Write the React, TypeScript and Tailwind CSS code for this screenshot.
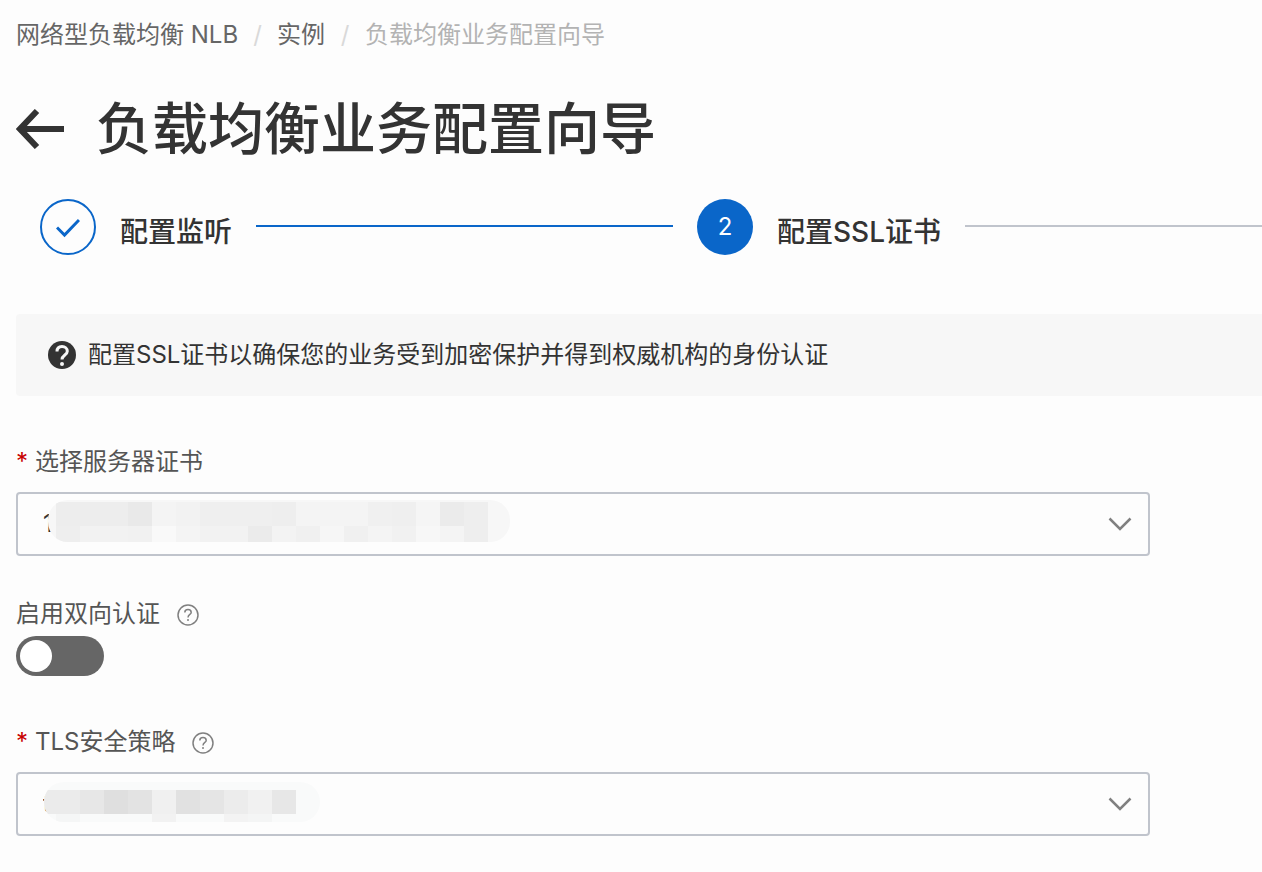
import { useState } from 'react'
import type { ReactNode } from 'react'

type Cell = [x: number, y: number, width: number, height: number, color: string]

const certificateCells: Cell[] = [
  [8, 2, 72, 24, '#ededed'],
  [80, 2, 24, 24, '#e9e9e9'],
  [104, 2, 24, 24, '#f4f4f4'],
  [128, 2, 24, 24, '#f2f2f2'],
  [152, 2, 72, 24, '#efefef'],
  [224, 2, 24, 24, '#eeeeee'],
  [248, 2, 72, 24, '#f4f4f4'],
  [320, 2, 24, 24, '#f0f0f0'],
  [344, 2, 24, 24, '#efefef'],
  [368, 2, 24, 24, '#f5f5f5'],
  [392, 2, 24, 24, '#ebebeb'],
  [416, 2, 24, 40, '#eeeeee'],
  [8, 26, 24, 16, '#eeeeee'],
  [32, 26, 48, 16, '#f2f2f2'],
  [80, 26, 24, 16, '#f1f1f1'],
  [104, 26, 24, 16, '#f9f9f9'],
  [128, 26, 24, 16, '#f4f4f4'],
  [152, 26, 48, 16, '#f2f2f2'],
  [200, 26, 24, 16, '#ebebeb'],
  [224, 26, 24, 16, '#f3f3f3'],
  [248, 26, 24, 16, '#f0f0f0'],
  [272, 26, 24, 16, '#f6f6f6'],
  [296, 26, 24, 16, '#f0f0f0'],
  [320, 26, 24, 16, '#f4f4f4'],
  [344, 26, 24, 16, '#f1f1f1'],
  [368, 26, 24, 16, '#f7f7f7'],
  [392, 26, 24, 16, '#f4f4f4'],
]

const policyCells: Cell[] = [
  [0, 8, 36, 24, '#ebebeb'],
  [36, 8, 24, 24, '#e7e7e7'],
  [60, 8, 24, 24, '#dfdfdf'],
  [84, 8, 24, 24, '#e3e3e3'],
  [108, 8, 24, 24, '#f0f0f0'],
  [132, 8, 24, 24, '#e1e1e1'],
  [156, 8, 24, 24, '#e5e5e5'],
  [180, 8, 24, 24, '#ececec'],
  [204, 8, 24, 24, '#f1f1f1'],
  [228, 8, 24, 24, '#e7e7e7'],
  [12, 32, 24, 8, '#f5f6f6'],
  [108, 32, 24, 8, '#f2f2f2'],
  [180, 32, 24, 8, '#f3f3f3'],
  [204, 32, 24, 8, '#f4f5f5'],
]

const Mosaic = ({ cells, width, height, fill, className }: { cells: Cell[]; width: number; height: number; fill: string; className: string }) => (
  <svg className={`pointer-events-none absolute overflow-hidden rounded-[20px] ${className}`} width={width} height={height} aria-hidden="true">
    <rect width={width} height={height} fill={fill} />
    {cells.map(([x, y, w, h, color], i) => (
      <rect key={i} x={x} y={y} width={w} height={h} fill={color} shapeRendering="crispEdges" />
    ))}
  </svg>
)

const HelpButton = ({ label }: { label: string }) => (
  <button type="button" aria-label={label} className="mt-0.5 ml-4 text-[#808080]">
    <svg width="24" height="24" viewBox="0 0 24 24" fill="none" stroke="currentColor" strokeWidth="1.5">
      <circle cx="12" cy="12" r="10" />
      <path d="M8.8 9.6C8.8 7.6 10 6.6 12 6.6s3.2 1 3.2 2.8c0 2-3.2 2.2-3.2 5" />
      <circle cx="12" cy="17" r="1" fill="currentColor" stroke="none" />
    </svg>
  </button>
)

const Required = () => <span className="mr-2 w-[11px] text-center text-[#c80000]">*</span>

const SelectBox = ({ id, value, children }: { id: string; value: string; children: ReactNode }) => (
  <div className="relative w-full max-w-[1134px]">
    <select
      id={id}
      className="block h-16 w-full appearance-none rounded-sm border-2 border-[#c0c4cc] bg-transparent px-[25px] text-2xl text-[#333]"
    >
      <option>{value}</option>
    </select>
    {children}
    <svg className="pointer-events-none absolute top-5 right-[18px]" width="24" height="24" fill="none" stroke="#808080" strokeWidth="2.5" aria-hidden="true">
      <path d="M1.5 6.5 12 17 22.5 6.5" />
    </svg>
  </div>
)

const Breadcrumb = () => (
  <nav aria-label="breadcrumb" className="flex text-2xl leading-9 whitespace-pre text-[#666]">
    <a href="#nlb">网络型负载均衡 NLB</a>
    <span className="w-[39px] text-center text-[#d9d9d9]">/</span>
    <a href="#instances">实例</a>
    <span className="w-10 text-center text-[#d9d9d9]">/</span>
    <span className="text-[#b3b3b3]" aria-current="page">负载均衡业务配置向导</span>
  </nav>
)

const Steps = () => (
  <ol className="mt-[30px] flex items-start pl-6 text-[28px] leading-[66px] font-medium whitespace-nowrap text-[#333]">
    <li className="flex items-start">
      <span className="flex size-14 items-center justify-center rounded-full border-2 border-[#0a66c9]">
        <svg width="24" height="24" fill="none" stroke="#0a66c9" strokeWidth="3" aria-hidden="true">
          <path d="M1 12.5 8.5 20 23 5" />
        </svg>
      </span>
      <span className="ml-6">配置监听</span>
      <span className="mx-6 mt-[26px] h-0.5 w-[417px] bg-[#0a66c9]" />
    </li>
    <li className="flex flex-1 items-start" aria-current="step">
      <span className="flex size-14 items-center justify-center rounded-full bg-[#0a66c9] text-2xl font-normal text-white">2</span>
      <span className="ml-6">配置SSL证书</span>
      <span className="mt-[26px] ml-6 h-0.5 flex-1 bg-[#c0c4cc]" />
    </li>
  </ol>
)

export default function App() {
  const [mutualAuth, setMutualAuth] = useState(false)

  return (
    <main className="min-h-screen overflow-hidden bg-[#fdfdfd] pt-[17px] pb-8 pl-4 font-[Inter,'Noto_Sans_CJK_SC',sans-serif] text-2xl leading-9 text-[#555]">
      <Breadcrumb />

      <header className="mt-9 flex items-center text-[#333]">
        <button type="button" aria-label="返回">
          <svg width="48" height="40" fill="none" stroke="currentColor" strokeWidth="6" aria-hidden="true">
            <path d="M48 20H4M21 2 4 20l17 18" />
          </svg>
        </button>
        <h1 className="ml-8 text-[56px] leading-[80px] font-medium">负载均衡业务配置向导</h1>
      </header>

      <Steps />

      <div className="mt-[49px] flex h-[82px] items-center rounded-l-sm bg-[#f7f7f7] pl-8 text-[#333]">
        <svg width="28" height="28" viewBox="0 0 28 28" fill="none" aria-hidden="true">
          <circle cx="14" cy="14" r="14" fill="#333" />
          <path d="M9 10.5C9 7 11 5.5 14 5.5s5.3 1.8 5.3 4.8c0 3.7-5.3 3.7-5.3 8.2" stroke="#f7f7f7" strokeWidth="3" />
          <circle cx="14" cy="23" r="2" fill="#f7f7f7" />
        </svg>
        <p className="ml-3">配置SSL证书以确保您的业务受到加密保护并得到权威机构的身份认证</p>
      </div>

      <form>
        <div className="mt-12 mb-3 flex">
          <Required />
          <label htmlFor="certificate">选择服务器证书</label>
        </div>
        <SelectBox id="certificate" value="1">
          <Mosaic cells={certificateCells} width={462} height={42} fill="#f7f7f7" className="top-2 left-8" />
        </SelectBox>

        <div className="mt-10 flex items-center">
          <label htmlFor="mutual-auth">启用双向认证</label>
          <HelpButton label="双向认证说明" />
        </div>
        <input
          id="mutual-auth"
          type="checkbox"
          role="switch"
          checked={mutualAuth}
          onChange={(e) => setMutualAuth(e.target.checked)}
          className="mt-1 block h-10 w-22 appearance-none rounded-full bg-[#666] p-1 before:block before:size-8 before:rounded-full before:bg-white checked:bg-[#0a66c9] checked:before:ml-auto"
        />

        <div className="mt-12 mb-3 flex items-center">
          <Required />
          <label htmlFor="tls-policy">TLS安全策略</label>
          <HelpButton label="TLS安全策略说明" />
        </div>
        <SelectBox id="tls-policy" value="t">
          <Mosaic cells={policyCells} width={276} height={40} fill="#f9fafa" className="top-[10px] left-7" />
        </SelectBox>
      </form>
    </main>
  )
}
